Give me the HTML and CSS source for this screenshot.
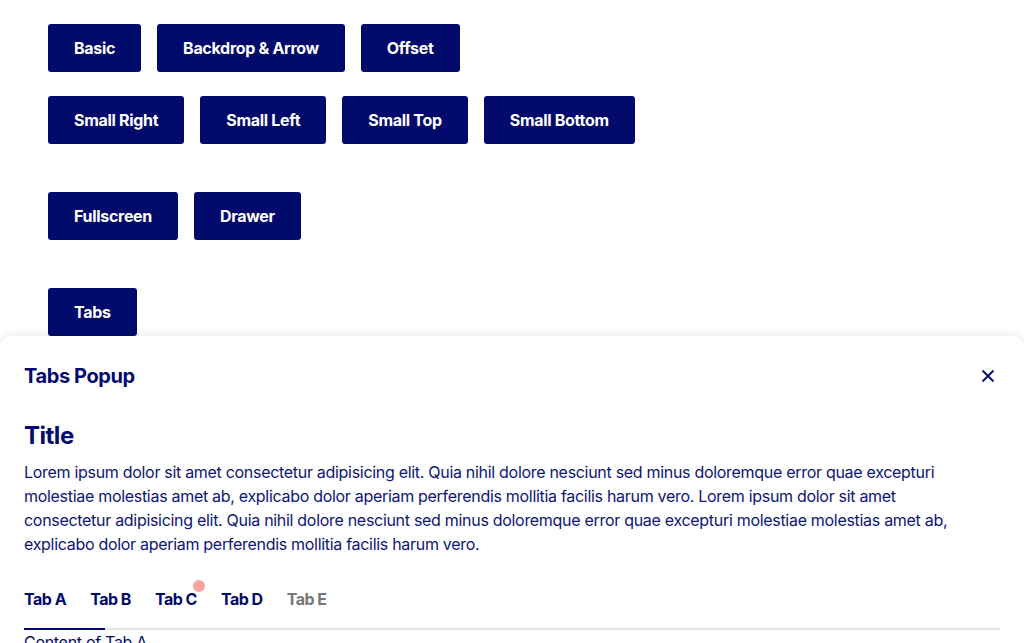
FILE: index.html
```html
<!DOCTYPE html>
<html>
<head>
<meta charset="utf-8">
<link rel="stylesheet" href="styles.css">
</head>
<body>
<main class="page">
  <div class="row">
    <button class="btn">Basic</button>
    <button class="btn">Backdrop &amp; Arrow</button>
    <button class="btn">Offset</button>
  </div>
  <div class="row">
    <button class="btn">Small Right</button>
    <button class="btn">Small Left</button>
    <button class="btn">Small Top</button>
    <button class="btn">Small Bottom</button>
  </div>
  <div class="row gap-lg">
    <button class="btn">Fullscreen</button>
    <button class="btn">Drawer</button>
  </div>
  <div class="row gap-lg">
    <button class="btn">Tabs</button>
  </div>
</main>
<section class="popup">
  <header class="popup-head">
    <h2 class="popup-title">Tabs Popup</h2>
    <button class="close" aria-label="Close">
      <svg width="14" height="14" viewBox="0 0 14 14"><path d="M1.5 1.5L12.5 12.5M12.5 1.5L1.5 12.5" stroke="#0a1170" stroke-width="2" fill="none"/></svg>
    </button>
  </header>
  <div class="popup-body">
    <h3 class="title">Title</h3>
    <p class="text">Lorem ipsum dolor sit amet consectetur adipisicing elit. Quia nihil dolore nesciunt sed minus doloremque error quae excepturi molestiae molestias amet ab, explicabo dolor aperiam perferendis mollitia facilis harum vero. Lorem ipsum dolor sit amet consectetur adipisicing elit. Quia nihil dolore nesciunt sed minus doloremque error quae excepturi molestiae molestias amet ab, explicabo dolor aperiam perferendis mollitia facilis harum vero.</p>
    <nav class="tabs">
      <span class="tab active">Tab A</span>
      <span class="tab">Tab B</span>
      <span class="tab badged">Tab C<span class="dot"></span></span>
      <span class="tab">Tab D</span>
      <span class="tab disabled">Tab E</span>
    </nav>
    <div class="tab-content">Content of Tab A</div>
  </div>
</section>
</body>
</html>
```
FILE: styles.css
```css
* { box-sizing: border-box; }
html, body { margin: 0; padding: 0; background: #fff; overflow: hidden; height: 643px; }
body { font-family: Inter, "Noto Sans", sans-serif; color: #020b6b; position: relative; }
.page { padding: 24px 48px 0; display: flex; flex-direction: column; gap: 24px; }
.row { display: flex; gap: 16px; }
.row.gap-lg { margin-top: 24px; }
.btn {
  height: 48px; padding: 0 26px; border: 0; border-radius: 3px;
  background: #020b6b; color: #fff; font-family: inherit;
  font-size: 16px; font-weight: 700; letter-spacing: -0.3px; cursor: pointer;
}
.popup {
  position: absolute; left: 0; right: 0; top: 336px; bottom: 0;
  background: #fff; border-radius: 12px 12px 0 0;
  box-shadow: 0 -2px 8px rgba(0,0,0,0.08);
  padding: 0 24px;
}
.popup-head { height: 80px; display: flex; align-items: center; justify-content: space-between; }
.popup-title { margin: 0; font-size: 20px; font-weight: 700; letter-spacing: -0.4px; }
.close { background: none; border: 0; padding: 0; width: 24px; height: 24px; display: flex; align-items: center; justify-content: center; }
.title { margin: 6px 0 10px; font-size: 24px; font-weight: 700; letter-spacing: -0.5px; line-height: 28px; }
.text { margin: 0; max-width: 950px; font-size: 16px; line-height: 24px; letter-spacing: -0.3px; color: #0d1575; }
.tabs { margin-top: 23px; display: flex; gap: 24px; border-bottom: 2px solid #e6e6e6; height: 51px; align-items: flex-start; }
.tab { position: relative; font-size: 16px; font-weight: 700; letter-spacing: -0.5px; line-height: 24px; padding-top: 8px; height: 49px; }
.tab.active::after { content: ""; position: absolute; left: 0; width: 81px; bottom: -2px; height: 2px; background: #020b6b; }
.tab.disabled { color: #777; }
.dot { position: absolute; right: -8px; top: 1px; width: 12px; height: 12px; border-radius: 50%; background: #f7a5a2; }
.tab-content { font-size: 16px; line-height: 24px; padding-top: 0; letter-spacing: -0.3px; }
```
